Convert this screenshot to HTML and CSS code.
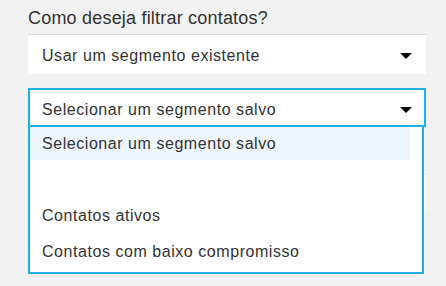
FILE: index.html
```html
<!DOCTYPE html>
<html lang="pt">
<head>
<meta charset="utf-8">
<title>Filtro de contatos</title>
<link rel="stylesheet" href="styles.css">
</head>
<body>
<div class="form">
  <div class="label">Como deseja filtrar contatos?</div>
  <div class="select">
    <span class="value">Usar um segmento existente</span>
    <svg class="caret" width="12" height="6" viewBox="0 0 12 6"><polygon points="0,0 12,0 6,6" fill="#000"/></svg>
  </div>
  <div class="combo">
    <div class="select focused">
      <span class="value">Selecionar um segmento salvo</span>
      <svg class="caret" width="12" height="6" viewBox="0 0 12 6"><polygon points="0,0 12,0 6,6" fill="#000"/></svg>
    </div>
    <ul class="menu">
      <li class="item active">Selecionar um segmento salvo</li>
      <li class="item">&nbsp;</li>
      <li class="item">Contatos ativos</li>
      <li class="item">Contatos com baixo compromisso</li>
    </ul>
  </div>
  <div class="select under"><span class="value">&nbsp;</span></div>
</div>
</body>
</html>
```
FILE: styles.css
```css
html, body {
  margin: 0;
  padding: 0;
  background: #f2f2f2;
}
body {
  min-height: 286px;
  font-family: "Liberation Sans", Arial, sans-serif;
  color: #333;
}
.form {
  width: 398px;
  padding: 8px 0 0 28px;
}
.label {
  font-size: 18px;
  line-height: 21px;
  letter-spacing: 0.2px;
  margin-bottom: 5px;
}
.select {
  box-sizing: border-box;
  height: 40px;
  background: #fff;
  border-top: 1px solid #dcdcdc;
  padding: 11px 14px 0 14px;
  display: flex;
  align-items: flex-start;
  justify-content: space-between;
  font-size: 16px;
  line-height: 20px;
  letter-spacing: 0.55px;
}
.caret {
  margin-top: 7px;
  flex: none;
}
.combo {
  position: relative;
  margin-top: 14px;
}
.select.focused {
  height: 39px;
  border: 2px solid #1eb0e8;
  padding: 10px 12px 0 12px;
}
.menu {
  position: absolute;
  top: 100%;
  left: 0;
  width: 396px;
  box-sizing: border-box;
  margin: 0;
  padding: 0 0 1px 0;
  list-style: none;
  background: #fff;
  border: 2px solid #1eb0e8;
  border-top: none;
  z-index: 2;
}
.item {
  height: 33px;
  line-height: 33px;
  margin: 0 12px 3px 0;
  padding-left: 12px;
  font-size: 16px;
  letter-spacing: 0.55px;
  color: #333;
  white-space: nowrap;
}
.item.active {
  background: #eef6fe;
}
.select.under {
  margin-top: 47px;
  height: 39px;
}
```
